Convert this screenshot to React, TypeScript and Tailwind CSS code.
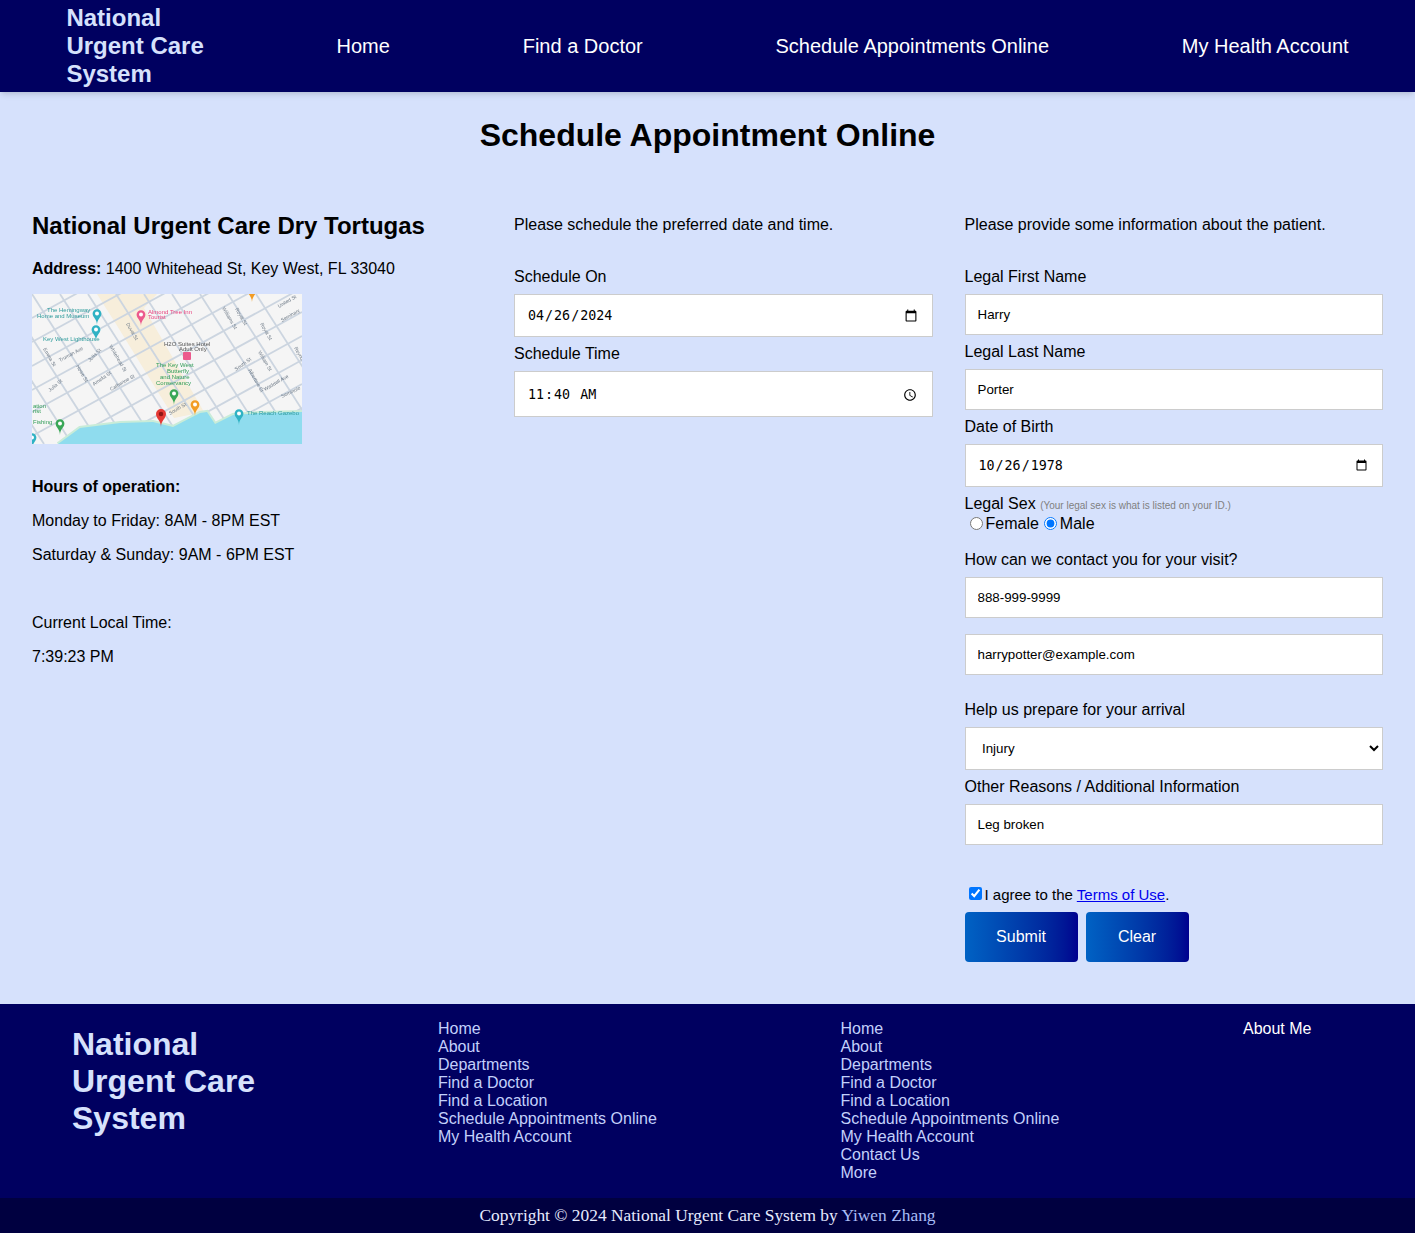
import React from "react";

const navLinks = ["Home", "Find a Doctor", "Schedule Appointments Online", "My Health Account"];
const footerLinks = [
  "Home",
  "About",
  "Departments",
  "Find a Doctor",
  "Find a Location",
  "Schedule Appointments Online",
  "My Health Account",
];

const inputClass =
  "block w-full border border-[#ccc] bg-white pl-3 pr-3 text-[13.33px] text-black outline-none";
const selectClass =
  "block w-full border border-[#ccc] bg-white pl-[12.5px] pr-[3px] text-[13.33px] text-black outline-none";
const dateClass =
  "block w-full border border-[#ccc] bg-white pl-3 pr-3 font-['DejaVu_Sans_Mono',monospace] text-[13.33px] text-black outline-none";
const buttonClass =
  "h-[50px] rounded-[4px] bg-gradient-to-r from-[#0062c4] to-[#00008f] text-base text-white";

function Pin({ x, y, color, big }: { x: number; y: number; color: string; big?: boolean }) {
  const r = big ? 5 : 4.4;
  return (
    <g>
      <path
        d={`M${x - r} ${y - r}a${r} ${r} 0 1 1 ${r * 2} 0c0 ${r * 0.9} -${r} ${r * 1.3} -${r} ${r * 2.6}c0 -${r * 1.3} -${r} -${r * 1.7} -${r} -${r * 2.6}z`}
        fill={color}
      />
      <circle cx={x} cy={y - r} r={r * 0.45} fill={big ? "#8f1616" : "#fff"} />
    </g>
  );
}

function MapLabel({ x, y, color, children }: { x: number; y: number; color: string; children: string }) {
  return (
    <text x={x} y={y} fontSize="6" fill={color} fontFamily="Liberation Sans, sans-serif">
      {children}
    </text>
  );
}

function StreetLabel({ x, y, angle, children }: { x: number; y: number; angle: number; children: string }) {
  return (
    <text
      x={x}
      y={y}
      fontSize="5"
      fill="#6f7b88"
      fontFamily="Liberation Sans, sans-serif"
      transform={`rotate(${angle} ${x} ${y})`}
    >
      {children}
    </text>
  );
}

function StreetMap() {
  const acrossLines = [24, 48, 72, 96, 118, 142, 166, 190, 214, 238, 262, 286];
  const alongLines = [-112, -84, -56, -28, 0, 28, 56, 84, 112, 140, 168, 196, 224];
  return (
    <svg viewBox="0 0 270 150" className="block h-[150px] w-[270px] blur-[0.5px]">
      <rect width="270" height="150" fill="#f5f5f5" />
      <path d="M65 0L125 0L112 14L172 118L142 124L84 30Z" fill="#f7eedb" />
      <g stroke="#ccd5e0" strokeWidth="1.8" fill="none">
        {acrossLines.map((c) => (
          <line key={c} x1="0" y1={c} x2="270" y2={c - 148} />
        ))}
        {alongLines.map((c) => (
          <line key={c} x1={c} y1="0" x2={c + 96} y2="150" />
        ))}
      </g>
      <path
        d="M26 150L48 134L88 129L121 128L141 133L168 119L175 118L183 130L201 121L228 119L270 118"
        fill="none"
        stroke="#c9ecd8"
        strokeWidth="4"
      />
      <path
        d="M26 150L48 134L88 129L121 128L141 133L168 119L175 118L183 130L201 121L228 119L270 118L270 150Z"
        fill="#8fdcee"
      />
      <StreetLabel x={94} y={30} angle={60}>Duval St</StreetLabel>
      <StreetLabel x={77} y={52} angle={60}>Whitehead St</StreetLabel>
      <StreetLabel x={58} y={68} angle={-45}>Julia St</StreetLabel>
      <StreetLabel x={28} y={68} angle={-28}>Truman Ave</StreetLabel>
      <StreetLabel x={11} y={55} angle={60}>Emma St</StreetLabel>
      <StreetLabel x={44} y={72} angle={60}>Howe St</StreetLabel>
      <StreetLabel x={62} y={92} angle={-35}>Amelia St</StreetLabel>
      <StreetLabel x={79} y={97} angle={-30}>Catherine St</StreetLabel>
      <StreetLabel x={18} y={98} angle={-40}>Julia St</StreetLabel>
      <StreetLabel x={190} y={14} angle={60}>Williams St</StreetLabel>
      <StreetLabel x={203} y={15} angle={60}>Royal St</StreetLabel>
      <StreetLabel x={228} y={30} angle={60}>Royal St</StreetLabel>
      <StreetLabel x={226} y={58} angle={60}>William St</StreetLabel>
      <StreetLabel x={204} y={77} angle={-35}>South St</StreetLabel>
      <StreetLabel x={216} y={76} angle={60}>Albertine St</StreetLabel>
      <StreetLabel x={233} y={97} angle={-30}>Waddell Ave</StreetLabel>
      <StreetLabel x={250} y={104} angle={-25}>Seminole</StreetLabel>
      <StreetLabel x={138} y={121} angle={-30}>South St</StreetLabel>
      <StreetLabel x={247} y={14} angle={-30}>United St</StreetLabel>
      <StreetLabel x={250} y={28} angle={-30}>Seminary</StreetLabel>
      <StreetLabel x={262} y={54} angle={60}>Reynolds</StreetLabel>
      <MapLabel x={15} y={18} color="#2f9c9c">The Hemingway</MapLabel>
      <MapLabel x={5} y={24} color="#2f9c9c">Home and Museum</MapLabel>
      <MapLabel x={11} y={47} color="#2f9c9c">Key West Lighthouse</MapLabel>
      <MapLabel x={116} y={20} color="#e8437f">Almond Tree Inn</MapLabel>
      <MapLabel x={116} y={25} color="#e8437f">Tourist</MapLabel>
      <MapLabel x={132} y={52} color="#555">H2O Suites Hotel</MapLabel>
      <MapLabel x={147} y={57} color="#555">Adult Only</MapLabel>
      <MapLabel x={124} y={73} color="#2f9c57">The Key West</MapLabel>
      <MapLabel x={135} y={79} color="#2f9c57">Butterfly</MapLabel>
      <MapLabel x={128} y={85} color="#2f9c57">and Nature</MapLabel>
      <MapLabel x={124} y={91} color="#2f9c57">Conservancy</MapLabel>
      <MapLabel x={215} y={121} color="#2f9c9c">The Reach Gazebo</MapLabel>
      <MapLabel x={1} y={114} color="#2f9c57">ation</MapLabel>
      <MapLabel x={1} y={119} color="#2f9c57">rist</MapLabel>
      <MapLabel x={1} y={130} color="#2f9c57">Fishing</MapLabel>
      <Pin x={65} y={24} color="#2fb2c4" />
      <Pin x={64} y={40} color="#2fb2c4" />
      <Pin x={109} y={25} color="#ec5a8d" />
      <rect x={151} y={58} width={8} height={8} rx={1} fill="#ec5a8d" />
      <Pin x={142} y={104} color="#3aa757" />
      <Pin x={163} y={115} color="#f29c24" />
      <Pin x={129} y={125} color="#e53935" big />
      <Pin x={207} y={124} color="#2fb2c4" />
      <Pin x={28} y={134} color="#3aa757" />
      <Pin x={0} y={148} color="#2fb2c4" />
      <Pin x={220} y={1} color="#f29c24" />
    </svg>
  );
}

export default function App() {
  return (
    <div className="min-h-[1233px] bg-[#d6e1fc] font-['Liberation_Sans',Arial,sans-serif] text-base leading-[18px] text-black">
      {/* header */}
      <header className="relative flex h-[92px] items-center justify-around bg-[#000060] shadow-md">
        <div className="text-2xl leading-[28px] font-bold whitespace-nowrap text-[#d6e1fc]">
          National
          <br />
          Urgent Care
          <br />
          System
        </div>
        {navLinks.map((link) => (
          <a key={link} className="text-xl leading-[23px] text-white">
            {link}
          </a>
        ))}
      </header>

      <main className="pb-[42px]">
        <h1 className="pt-[25px] text-center text-[32px] leading-[37px] font-bold">
          Schedule Appointment Online
        </h1>

        <div className="mt-[58px] grid grid-cols-[450px_1fr_1fr] gap-8 px-8">
          {/* location */}
          <section>
            <h2 className="text-2xl leading-[28px] font-bold">National Urgent Care Dry Tortugas</h2>
            <p className="mt-[20px]">
              <b>Address:</b> 1400 Whitehead St, Key West, FL 33040
            </p>
            <div className="mt-4">
              <StreetMap />
            </div>
            <p className="mt-[34px] font-bold">Hours of operation:</p>
            <p className="mt-4">Monday to Friday: 8AM - 8PM EST</p>
            <p className="mt-4">Saturday &amp; Sunday: 9AM - 6PM EST</p>
            <p className="mt-[50px]">Current Local Time:</p>
            <p className="mt-4">7:39:23 PM</p>
          </section>

          {/* schedule */}
          <section className="pt-[4px]">
            <p>Please schedule the preferred date and time.</p>
            <label className="mt-[34px] block">Schedule On</label>
            <input type="date" defaultValue="2024-04-26" className={`mt-2 h-[43px] ${dateClass}`} />
            <label className="mt-2 block">Schedule Time</label>
            <input type="time" defaultValue="11:40" className={`mt-2 h-[46px] pt-[2px] ${dateClass}`} />
          </section>

          {/* patient */}
          <section className="pt-[4px]">
            <p>Please provide some information about the patient.</p>
            <label className="mt-[34px] block">Legal First Name</label>
            <input defaultValue="Harry" className={`mt-2 h-[41px] ${inputClass}`} />
            <label className="mt-2 block">Legal Last Name</label>
            <input defaultValue="Porter" className={`mt-2 h-[41px] ${inputClass}`} />
            <label className="mt-2 block">Date of Birth</label>
            <input type="date" defaultValue="1978-10-26" className={`mt-2 h-[43px] ${dateClass}`} />
            <div className="mt-2">
              Legal Sex{" "}
              <span className="text-[10px] text-[#808080]">(Your legal sex is what is listed on your ID.)</span>
            </div>
            <div className="flex items-center">
              <input type="radio" name="sex" className="mr-[3px] mb-[2px] ml-[5px] size-[13px]" />
              <span>Female</span>
              <input type="radio" name="sex" defaultChecked className="mr-[3px] mb-[2px] ml-[5px] size-[13px]" />
              <span>Male</span>
            </div>
            <label className="mt-[18px] block">How can we contact you for your visit?</label>
            <input defaultValue="888-999-9999" className={`mt-2 h-[41px] ${inputClass}`} />
            <input defaultValue="harrypotter@example.com" className={`mt-4 h-[41px] ${inputClass}`} />
            <label className="mt-[26px] block">Help us prepare for your arrival</label>
            <select defaultValue="Injury" className={`mt-2 h-[43px] ${selectClass}`}>
              <option>Injury</option>
            </select>
            <label className="mt-2 block">Other Reasons / Additional Information</label>
            <input defaultValue="Leg broken" className={`mt-2 h-[41px] ${inputClass}`} />
            <div className="mt-[41px] flex items-center">
              <input type="checkbox" defaultChecked className="mr-[3px] mb-[3px] ml-1 size-[13px]" />
              <span className="text-[15px]">
                I agree to the <a className="text-[#0000ee] underline">Terms of Use</a>.
              </span>
            </div>
            <div className="mt-2 flex gap-2">
              <button className={`w-[113px] ${buttonClass}`}>Submit</button>
              <button className={`w-[103px] ${buttonClass}`}>Clear</button>
            </div>
          </section>
        </div>
      </main>

      {/* footer */}
      <footer className="grid grid-cols-[366px_402.5px_402.5px_1fr] bg-[#000060] py-4 pl-[72px] text-[#c3d0fb]">
        <div className="mt-[6px] text-[32px] leading-[37px] font-bold whitespace-nowrap text-[#d6e1fc]">
          National
          <br />
          Urgent Care
          <br />
          System
        </div>
        <ul>
          {footerLinks.map((link) => (
            <li key={link}>{link}</li>
          ))}
        </ul>
        <ul>
          {footerLinks.map((link) => (
            <li key={link}>{link}</li>
          ))}
          <li>Contact Us</li>
          <li>More</li>
        </ul>
        <div className="text-white">About Me</div>
      </footer>
      <div className="flex h-[35px] items-center justify-center bg-[#000040] pb-[1px] font-['Liberation_Serif',serif] text-[17.4px] text-[#e6ebff] oldstyle-nums">
        <span>
          Copyright © 2024 National Urgent Care System by <a className="text-[#a9bdf6]">Yiwen Zhang</a>
        </span>
      </div>
    </div>
  );
}
